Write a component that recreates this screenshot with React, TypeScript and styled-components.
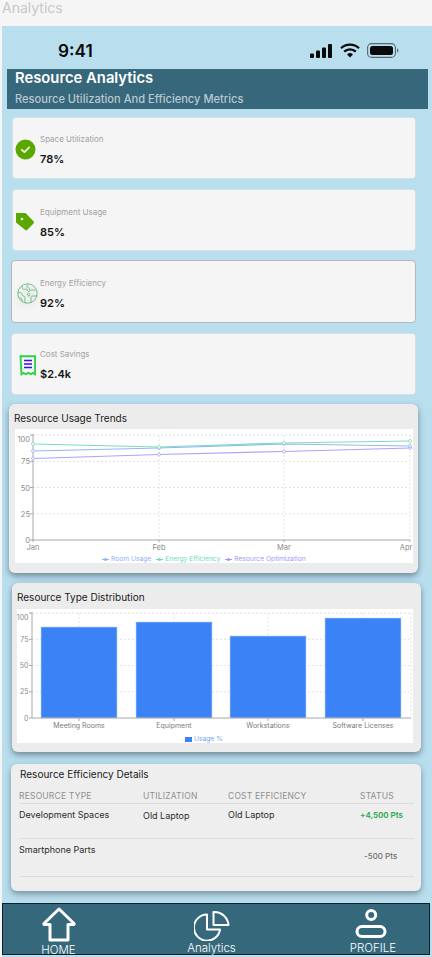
import React from "react";
import styled, { createGlobalStyle } from "styled-components";

const Global = createGlobalStyle`
  html, body { margin: 0; padding: 0; background: #f5f5f5; }
  body { font-family: Inter, "Noto Sans", sans-serif; width: 432px; height: 957px; overflow: hidden; }
  svg { display: block; }
  svg text { font-family: Inter, "Noto Sans", sans-serif; }
`;

const Page = styled.div`
  width: 432px;
  height: 957px;
  display: flex;
  flex-direction: column;
  overflow: hidden;
`;
const PageTitle = styled.div`
  height: 26px;
  padding: 0 0 0 2px;
  font-size: 14px;
  line-height: 16px;
  color: #c8c8c8;
`;
const Frame = styled.div`
  margin-left: 2px;
  width: 430px;
  height: 931px;
  background: #b9deee;
  display: flex;
  flex-direction: column;
`;
const StatusBar = styled.div`
  height: 43px;
  box-sizing: border-box;
  padding: 15px 33px 0 56px;
  display: flex;
  justify-content: space-between;
  align-items: flex-start;
`;
const Clock = styled.div`
  font-size: 17.2px;
  line-height: 20px;
  font-weight: 600;
  color: #0a0a0a;
`;
const StatusIcons = styled.div`
  display: flex;
  align-items: center;
  gap: 7px;
  padding-top: 2px;
`;
const Header = styled.header`
  margin-left: 5px;
  width: 421px;
  height: 40px;
  box-sizing: border-box;
  padding: 0 0 0 8px;
  background: #36677a;
  display: flex;
  flex-direction: column;
`;
const HeaderTitle = styled.div`
  font-size: 14.8px;
  line-height: 18px;
  font-weight: 600;
  color: #fff;
`;
const HeaderSub = styled.div`
  margin-top: 4.5px;
  font-size: 11.1px;
  line-height: 14px;
  font-weight: 500;
  color: #b9c9d0;
`;
const Metric = styled.div<{ $x: number; $top: number; $h?: number; $outlined?: boolean }>`
  margin-left: ${(p) => p.$x}px;
  margin-top: ${(p) => p.$top}px;
  width: ${(p) => 414 - p.$x}px;
  height: ${(p) => p.$h ?? 62}px;
  box-sizing: border-box;
  background: #f5f5f5;
  border-radius: 4px;
  border: 1px solid ${(p) => (p.$outlined ? "#b4b8ba" : "#d6e0e4")};
  display: flex;
  align-items: center;
`;
const MetricIcon = styled.div<{ $left: number; $glow?: boolean }>`
  width: 24px;
  height: 24px;
  margin-left: ${(p) => p.$left}px;
  margin-top: 3px;
  flex: none;
  display: flex;
  align-items: center;
  justify-content: center;
  ${(p) => (p.$glow ? "filter: drop-shadow(0 3px 3px rgba(0,0,0,.16));" : "")}
`;
const MetricText = styled.div<{ $left: number; $dy: number }>`
  margin-left: ${(p) => p.$left}px;
  margin-top: ${(p) => p.$dy}px;
  display: flex;
  flex-direction: column;
`;
const MetricLabel = styled.div`
  font-size: 8px;
  line-height: 12px;
  color: #a2a2a2;
`;
const MetricValue = styled.div`
  margin-top: 6px;
  font-size: 11px;
  line-height: 16px;
  font-weight: 600;
  color: #141414;
`;
const ChartCard = styled.section<{ $x: number; $top: number; $pl: number; $pr: number }>`
  margin-left: ${(p) => p.$x}px;
  margin-top: ${(p) => p.$top}px;
  width: 409px;
  height: 169px;
  box-sizing: border-box;
  background: #ececec;
  border-radius: 6px;
  box-shadow: 0 3px 6px rgba(50, 70, 80, 0.55);
  padding: 0 ${(p) => p.$pr}px 0 ${(p) => p.$pl}px;
  display: flex;
  flex-direction: column;
`;
const CardTitle = styled.h2<{ $h: number; $pt: number; $ml: number }>`
  margin: 0 0 0 ${(p) => p.$ml}px;
  height: ${(p) => p.$h}px;
  box-sizing: border-box;
  padding-top: ${(p) => p.$pt}px;
  display: flex;
  align-items: center;
  font-size: 10px;
  font-weight: 400;
  color: #1a1a1a;
`;
const ChartPanel = styled.div`
  background: #fff;
  height: 134px;
  display: flex;
  flex-direction: column;
`;
const Legend = styled.div<{ $pad: number }>`
  height: 8px;
  padding-left: ${(p) => p.$pad}px;
  display: flex;
  align-items: center;
  gap: 5px;
  font-size: 6.7px;
`;
const LegendItem = styled.span<{ $c: string }>`
  display: flex;
  align-items: center;
  gap: 2px;
  color: ${(p) => p.$c};
`;
const Swatch = styled.span`
  width: 7px;
  height: 5px;
  background: #3b82f6;
`;
const Details = styled.section`
  margin-left: 9px;
  margin-top: 12px;
  width: 410px;
  height: 127px;
  box-sizing: border-box;
  background: #eeeeee;
  border-radius: 6px;
  box-shadow: 0 3px 6px rgba(50, 70, 80, 0.5);
  padding: 0 7px 0 8px;
  display: flex;
  flex-direction: column;
`;
const DetailsTitle = styled.h2`
  margin: 0;
  height: 20px;
  padding-left: 1px;
  display: flex;
  align-items: center;
  font-size: 10px;
  font-weight: 400;
  color: #1a1a1a;
`;
const Row = styled.div<{ $h: number; $pad: number }>`
  height: ${(p) => p.$h}px;
  box-sizing: border-box;
  padding-top: ${(p) => p.$pad}px;
  border-bottom: 1px solid #dddddd;
  display: grid;
  grid-template-columns: 124px 85px 132px 1fr;
  align-items: start;
`;
const HeadCell = styled.div`
  font-size: 8.5px;
  line-height: 12px;
  letter-spacing: 0.2px;
  color: #8f8f8f;
`;
const Cell = styled.div<{ $dy?: number }>`
  font-size: 9px;
  line-height: 12px;
  color: #2c2c2c;
  margin-top: ${(p) => p.$dy ?? 0}px;
`;
const Pts = styled.div<{ $c: string; $dy: number; $dx: number; $w: number }>`
  font-size: 8px;
  line-height: 12px;
  font-weight: ${(p) => p.$w};
  color: ${(p) => p.$c};
  margin-top: ${(p) => p.$dy}px;
  margin-left: ${(p) => p.$dx}px;
`;
const Nav = styled.nav`
  margin-top: 12px;
  width: 428px;
  height: 52px;
  box-sizing: border-box;
  background: #36687b;
  border: 1px solid #10202a;
  display: grid;
  grid-template-columns: 112px 1fr 112px;
`;
const NavItem = styled.div<{ $pad: number; $shift: number }>`
  padding-top: ${(p) => p.$pad}px;
  display: flex;
  flex-direction: column;
  align-items: center;
  margin-left: ${(p) => p.$shift}px;
`;
const NavLabel = styled.div<{ $top: number }>`
  margin-top: ${(p) => p.$top}px;
  font-size: 11.5px;
  line-height: 13px;
  font-weight: 300;
  color: #fff;
`;

const GREEN = "#5aa700";

const Check = () => (
  <svg width="21" height="21" viewBox="0 0 21 21">
    <circle cx="10.5" cy="10.5" r="10" fill={GREEN} />
    <path d="M6.8 10.8l2.6 2.4 4.8-4.8" fill="none" stroke="#eef6e0" strokeWidth="1.8" strokeLinecap="round" strokeLinejoin="round" />
  </svg>
);
const Tag = () => (
  <svg width="20" height="20" viewBox="0 0 20 20">
    <path d="M1 1h9.5l8 8.2a1.6 1.6 0 0 1 0 2.2l-6.2 6.4a1.6 1.6 0 0 1-2.3 0L1 10.6z" fill={GREEN} />
    <circle cx="7" cy="7" r="1.3" fill="#e8f3d8" />
  </svg>
);
const Globe = () => (
  <svg width="21" height="21" viewBox="0 0 21 21" fill="none" stroke="#4fb56d" strokeWidth="0.8" strokeLinejoin="round">
    <circle cx="10.5" cy="10.5" r="9.7" />
    <path d="M5 3c.6 1.8.2 3 1.6 3.4 1.5.4 2-1 3.2-.4 1 .6.2 1.8 1.4 2.4 1.4.5 1.7-1 2.7-1.3 1.2-.3 2.4-.2 4.6.2" />
    <path d="M11.5 1c-.6 1.2-1.9 1.4-1.6 2.6.3 1 1.8.6 2.4 1.6.5 1-.2 1.7.9 2" />
    <path d="M1 10c1.4-.7 3-.6 3.7.4.7 1 .2 2 1.3 2.5 1.2.6 2 .4 2.2 1.6.2 1.2-.6 1.5-.4 2.8.1 1 .4 1.9.8 2.7" />
    <path d="M20 13h-4c-1.2 0-2 .8-2 2v4.8" />
    <path d="M10.5 10.8c1-.5 2-.2 2.4.6.4.9-.3 1.7-1.2 1.6-1-.1-1.9-1.6-1.2-2.2z" />
    <path d="M2.5 14.5c1.2 0 2 .7 2.2 1.8.1.8.6 1.2 1.2 1.5" />
  </svg>
);
const Receipt = () => (
  <svg width="18" height="22" viewBox="0 0 18 22">
    <path d="M1.5 1.2h14.6v18l-2-1.3-2.4 1.3-2.4-1.3-2.4 1.3-2.4-1.3-2 1.3z" fill="#f5f5f5" stroke="#2fd24a" strokeWidth="1.9" />
    <path d="M5 5.5h8M5 9h8M5 12.5h8" stroke="#3a10e8" strokeWidth="1.7" />
  </svg>
);
const Signal = () => (
  <svg width="23" height="14" viewBox="0 0 23 14">
    <rect x="0" y="9.5" width="4" height="4.5" rx="1" fill="#0a0a0a" />
    <rect x="6" y="6.5" width="4" height="7.5" rx="1" fill="#0a0a0a" />
    <rect x="12" y="3.5" width="4" height="10.5" rx="1" fill="#0a0a0a" />
    <rect x="18" y="0" width="4" height="14" rx="1" fill="#0a0a0a" />
  </svg>
);
const Wifi = () => (
  <svg width="20" height="15" viewBox="0 0 20 15">
    <path d="M1 5.2a13 13 0 0 1 18 0M4.2 8.6a8.4 8.4 0 0 1 11.6 0" fill="none" stroke="#0a0a0a" strokeWidth="2.2" />
    <path d="M7 11.4a4.3 4.3 0 0 1 6 0L10 14.6z" fill="#0a0a0a" />
  </svg>
);
const Battery = () => (
  <svg width="32" height="15" viewBox="0 0 32 15">
    <rect x="0.6" y="0.6" width="27.8" height="13.8" rx="4" fill="none" stroke="#54696f" strokeWidth="1.1" />
    <rect x="3" y="3" width="23" height="9" rx="2.5" fill="#0a0a0a" />
    <path d="M30 5.5v4c.9-.3 1.4-1.1 1.4-2s-.5-1.700-1.400-2z" fill="#54696f" />
  </svg>
);

const TrendChart = () => {
  const xs = [18, 144, 269, 395];
  const labelXs = [18, 144, 269, 391];
  const ys = [6, 32.3, 58.5, 84.8, 111];
  const series = [
    { c: "#a8a4fb", p: [29.5, 25.5, 22.5, 19] },
    { c: "#93b7fa", p: [22, 19, 15, 17] },
    { c: "#7fdcbc", p: [15, 18, 14, 12] },
  ];
  return (
    <svg width="398" height="126" viewBox="0 0 398 126">
      {ys.slice(0, 4).map((y) => (
        <line key={y} x1="18" x2="395" y1={y} y2={y} stroke="#e2e2e2" strokeDasharray="2 2" />
      ))}
      {xs.slice(1).map((x) => (
        <line key={x} x1={x} x2={x} y1="6" y2="111" stroke="#e2e2e2" strokeDasharray="2 2" />
      ))}
      <line x1="18" x2="18" y1="5" y2="111" stroke="#a8a8a8" />
      <line x1="18" x2="395" y1="111" y2="111" stroke="#a8a8a8" />
      {ys.map((y, i) => (
        <g key={y}>
          <line x1="15" x2="18" y1={y} y2={y} stroke="#a8a8a8" />
          <text x="15" y={y + (i === 0 ? 7 : 3)} textAnchor="end" fontSize="7.5" fill="#8a8a8a">
            {[100, 75, 50, 25, 0][i]}
          </text>
        </g>
      ))}
      {xs.map((x, i) => (
        <g key={x}>
          <line x1={x} x2={x} y1="111" y2="113" stroke="#a8a8a8" />
          <text x={labelXs[i]} y="121" textAnchor="middle" fontSize="7.5" fill="#8a8a8a">
            {["Jan", "Feb", "Mar", "Apr"][i]}
          </text>
        </g>
      ))}
      {series.map((s) => (
        <g key={s.c}>
          <polyline points={s.p.map((y, i) => `${xs[i]},${y}`).join(" ")} fill="none" stroke={s.c} strokeWidth="1.2" />
          {s.p.map((y, i) => (
            <circle key={i} cx={xs[i]} cy={y} r="1.5" fill="#fff" stroke={s.c} strokeWidth="0.8" />
          ))}
        </g>
      ))}
    </svg>
  );
};

const LegendMark = ({ c }: { c: string }) => (
  <svg width="7" height="5" viewBox="0 0 7 5">
    <line x1="0" x2="7" y1="2.5" y2="2.5" stroke={c} />
    <circle cx="3.5" cy="2.5" r="1.6" fill={c} />
  </svg>
);

const BarChart = () => {
  const bars = [
    { x: 24, top: 18, label: "Meeting Rooms" },
    { x: 119, top: 13, label: "Equipment" },
    { x: 213, top: 27, label: "Workstations" },
    { x: 308, top: 9, label: "Software Licenses" },
  ];
  const ys = [4, 30.3, 56.5, 82.8, 109];
  return (
    <svg width="396" height="126" viewBox="0 0 396 126">
      {ys.slice(0, 4).map((y) => (
        <line key={y} x1="15" x2="394" y1={y} y2={y} stroke="#e2e2e2" strokeDasharray="2 2" />
      ))}
      {bars.map((b) => (
        <line key={b.x} x1={b.x + 38} x2={b.x + 38} y1="4" y2="109" stroke="#e2e2e2" strokeDasharray="2 2" />
      ))}
      <line x1="394" x2="394" y1="4" y2="109" stroke="#e2e2e2" strokeDasharray="2 2" />
      {bars.map((b) => (
        <rect key={b.label} x={b.x} y={b.top} width="76" height={109 - b.top} fill="#3b82f6" stroke="#bcd4fb" strokeWidth="0.6" />
      ))}
      <line x1="15" x2="15" y1="3" y2="109" stroke="#a8a8a8" />
      <line x1="15" x2="394" y1="109" y2="109" stroke="#a8a8a8" />
      {ys.map((y, i) => (
        <g key={y}>
          <line x1="12" x2="15" y1={y} y2={y} stroke="#a8a8a8" />
          <text x="11.5" y={y + (i === 0 ? 7 : 2.5)} textAnchor="end" fontSize="7" fill="#8a8a8a">
            {[100, 75, 50, 25, 0][i]}
          </text>
        </g>
      ))}
      {bars.map((b) => (
        <g key={b.label}>
          <line x1={b.x + 38} x2={b.x + 38} y1="109" y2="112" stroke="#a8a8a8" />
          <text x={b.x + 38} y="119" textAnchor="middle" fontSize="7" fill="#7a7a7a">
            {b.label}
          </text>
        </g>
      ))}
    </svg>
  );
};

const HomeIcon = () => (
  <svg width="36" height="36" viewBox="0 0 36 36">
    <path d="M18 3 33 17.5a.6.6 0 0 1-.4 1H27V34H9V18.5H3.4a.6.6 0 0 1-.4-1z" fill="none" stroke="#fff" strokeWidth="3" strokeLinejoin="round" />
  </svg>
);
const PieIcon = () => (
  <svg width="36" height="31" viewBox="0 0 36 31">
    <path d="M13 4.5V19.5H26A13.1 13.1 0 1 1 13 4.5z" fill="none" stroke="#fff" strokeWidth="2" strokeLinejoin="round" />
    <path d="M19.5 2A14 14 0 0 1 34.5 15H19.5z" fill="none" stroke="#fff" strokeWidth="2" strokeLinejoin="round" />
  </svg>
);
const UserIcon = () => (
  <svg width="36" height="30" viewBox="0 0 36 30">
    <circle cx="16.2" cy="7" r="4.5" fill="none" stroke="#fff" strokeWidth="3" />
    <rect x="2" y="18.5" width="28" height="10" rx="5" fill="none" stroke="#fff" strokeWidth="3" />
  </svg>
);

export default function App() {
  return (
    <Page>
      <Global />
      <PageTitle>Analytics</PageTitle>
      <Frame>
        <StatusBar>
          <Clock>9:41</Clock>
          <StatusIcons>
            <Signal />
            <Wifi />
            <Battery />
          </StatusIcons>
        </StatusBar>
        <Header>
          <HeaderTitle>Resource Analytics</HeaderTitle>
          <HeaderSub>Resource Utilization And Efficiency Metrics</HeaderSub>
        </Header>
        <Metric $x={10} $top={8}>
          <MetricIcon $left={0}><Check /></MetricIcon>
          <MetricText $left={3} $dy={3}>
            <MetricLabel>Space Utilization</MetricLabel>
            <MetricValue>78%</MetricValue>
          </MetricText>
        </Metric>
        <Metric $x={10} $top={10}>
          <MetricIcon $left={0}><Tag /></MetricIcon>
          <MetricText $left={3} $dy={6}>
            <MetricLabel>Equipment Usage</MetricLabel>
            <MetricValue>85%</MetricValue>
          </MetricText>
        </Metric>
        <Metric $x={9} $top={9} $h={63} $outlined>
          <MetricIcon $left={3} $glow><Globe /></MetricIcon>
          <MetricText $left={1} $dy={4}>
            <MetricLabel>Energy Efficiency</MetricLabel>
            <MetricValue>92%</MetricValue>
          </MetricText>
        </Metric>
        <Metric $x={9} $top={10}>
          <MetricIcon $left={4}><Receipt /></MetricIcon>
          <MetricText $left={0} $dy={2}>
            <MetricLabel>Cost Savings</MetricLabel>
            <MetricValue>$2.4k</MetricValue>
          </MetricText>
        </Metric>
        <ChartCard $x={7} $top={9} $pl={6} $pr={5}>
          <CardTitle $h={25} $pt={3} $ml={-1}>Resource Usage Trends</CardTitle>
          <ChartPanel>
            <TrendChart />
            <Legend $pad={87}>
              <LegendItem $c="#8fb2fa"><LegendMark c="#8fb2fa" />Room Usage</LegendItem>
              <LegendItem $c="#6fdcb6"><LegendMark c="#6fdcb6" />Energy Efficiency</LegendItem>
              <LegendItem $c="#a09cfb"><LegendMark c="#a09cfb" />Resource Optimization</LegendItem>
            </Legend>
          </ChartPanel>
        </ChartCard>
        <ChartCard $x={10} $top={10} $pl={5} $pr={8}>
          <CardTitle $h={26} $pt={2} $ml={0}>Resource Type Distribution</CardTitle>
          <ChartPanel>
            <BarChart />
            <Legend $pad={168}>
              <LegendItem $c="#7aa5f8"><Swatch />Usage %</LegendItem>
            </Legend>
          </ChartPanel>
        </ChartCard>
        <Details>
          <DetailsTitle>Resource Efficiency Details</DetailsTitle>
          <Row $h={20} $pad={6}>
            <HeadCell>RESOURCE TYPE</HeadCell>
            <HeadCell>UTILIZATION</HeadCell>
            <HeadCell>COST EFFICIENCY</HeadCell>
            <HeadCell>STATUS</HeadCell>
          </Row>
          <Row $h={35} $pad={5}>
            <Cell>Development Spaces</Cell>
            <Cell $dy={1}>Old Laptop</Cell>
            <Cell>Old Laptop</Cell>
            <Pts $c="#22a84c" $dy={0} $dx={0} $w={600}>+4,500 Pts</Pts>
          </Row>
          <Row $h={38} $pad={5}>
            <Cell>Smartphone Parts</Cell>
            <span />
            <span />
            <Pts $c="#6e6e6e" $dy={6} $dx={4} $w={500}>-500 Pts</Pts>
          </Row>
        </Details>
        <Nav>
          <NavItem $pad={2} $shift={-1}>
            <HomeIcon />
            <NavLabel $top={1.5}>HOME</NavLabel>
          </NavItem>
          <NavItem $pad={6} $shift={-9}>
            <PieIcon />
            <NavLabel $top={0.5}>Analytics</NavLabel>
          </NavItem>
          <NavItem $pad={4} $shift={0}>
            <UserIcon />
            <NavLabel $top={4}>PROFILE</NavLabel>
          </NavItem>
        </Nav>
      </Frame>
    </Page>
  );
}
